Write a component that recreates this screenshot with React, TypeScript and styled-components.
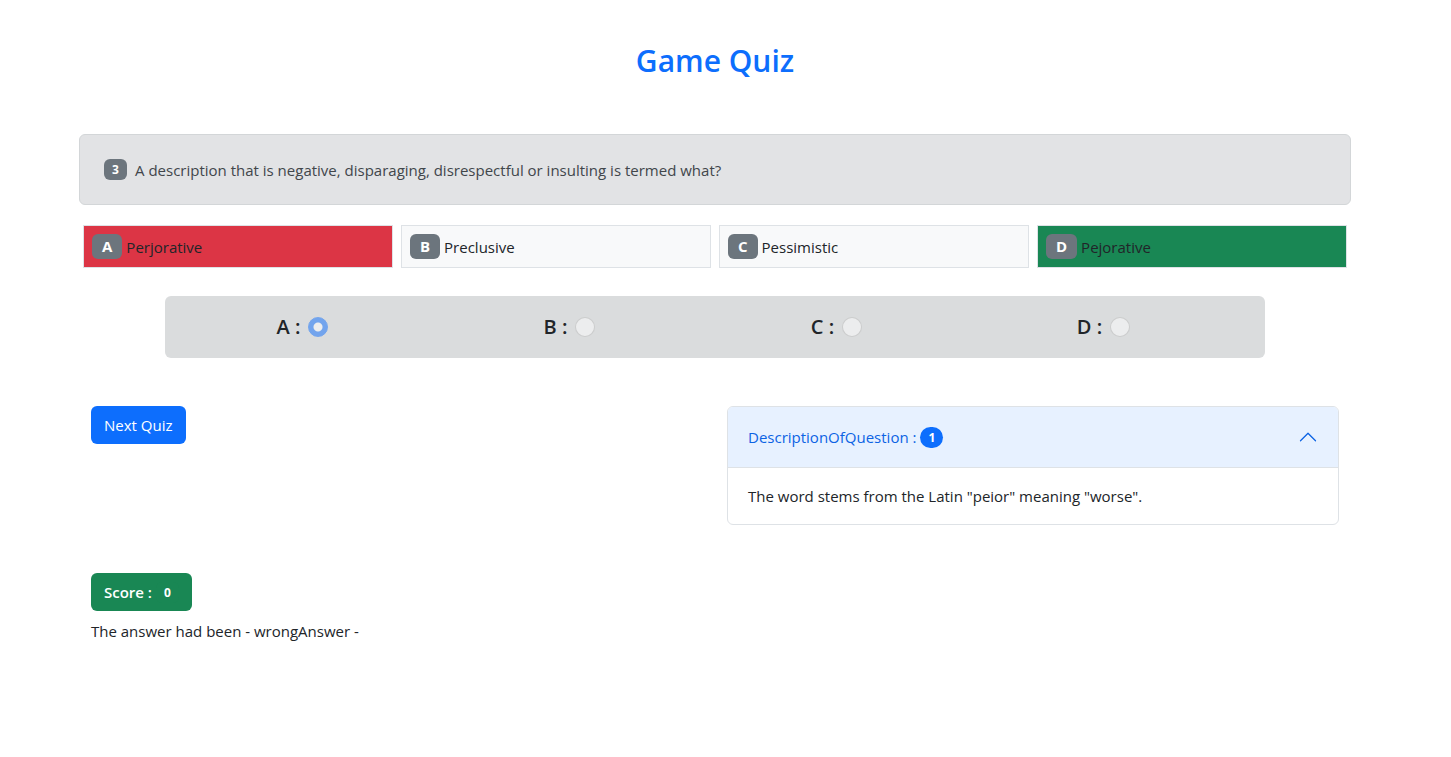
import React, { useState } from "react";
import styled, { createGlobalStyle } from "styled-components";

const GlobalStyle = createGlobalStyle`
  *, *::before, *::after { box-sizing: border-box; }
  body {
    margin: 0;
    background: #fff;
    color: #212529;
    font-family: "Segoe UI", "Open Sans", "Noto Sans", sans-serif;
    font-size: 15px;
    line-height: 24px;
  }
  button, input { font: inherit; }
`;

const Page = styled.div`
  padding: 40px 21px 40px 0;
`;

const Container = styled.main`
  max-width: 1320px;
  margin: 0 auto;
  padding: 0 24px;
`;

const Title = styled.h1`
  margin: 0 0 52px;
  color: #0d6efd;
  font-size: 30px;
  font-weight: 600;
  line-height: 42px;
  text-align: center;
`;

const Question = styled.div`
  display: flex;
  align-items: center;
  gap: 8px;
  min-height: 71px;
  padding: 16px 24px;
  color: #41464b;
  background: #e2e3e5;
  border: 1px solid #d3d6d8;
  border-radius: 6px;
`;

const Badge = styled.span<{ $color?: string; $pill?: boolean }>`
  display: inline-block;
  min-width: 23px;
  padding: 0 8px;
  color: #fff;
  background: ${(p) => p.$color ?? "#6c757d"};
  border-radius: ${(p) => (p.$pill ? "11px" : "6px")};
  font-size: 12px;
  font-weight: 700;
  line-height: 21px;
  text-align: center;
`;

const Answers = styled.ul`
  display: grid;
  grid-template-columns: repeat(4, 1fr);
  gap: 8px;
  margin: 20px 0 28px;
  padding: 0 4px;
  list-style: none;
`;

const fills = { plain: "#f8f9fa", wrong: "#dc3545", correct: "#198754" };

const Answer = styled.li<{ $state: keyof typeof fills }>`
  display: flex;
  align-items: center;
  gap: 4px;
  padding: 8px;
  background: ${(p) => fills[p.$state]};
  border: 1px solid #dee2e6;
`;

const Letter = styled(Badge)`
  min-width: 29px;
  padding: 0 10px;
  font-size: 15px;
  line-height: 25px;
`;

const Choices = styled.fieldset`
  display: grid;
  grid-template-columns: repeat(4, 1fr);
  max-width: 1100px;
  margin: 0 auto 48px;
  padding: 19px 16px;
  background: #dadcdd;
  border: 0;
  border-radius: 6px;
`;

const Choice = styled.label`
  display: flex;
  align-items: center;
  justify-content: center;
  gap: 8px;
  padding-right: 24px;
  font-size: 20px;
  font-weight: 600;
`;

const Radio = styled.input`
  appearance: none;
  width: 20px;
  height: 20px;
  margin: 0;
  background: #fff;
  border: 1px solid rgba(0, 0, 0, 0.25);
  border-radius: 50%;
  opacity: 0.5;

  &:checked {
    background: radial-gradient(circle, #fff 4px, #0d6efd 5px);
    border-color: #0d6efd;
  }
`;

const Columns = styled.div`
  display: grid;
  grid-template-columns: repeat(2, 1fr);
  gap: 24px;
  align-items: start;
  padding: 0 12px;
`;

const Button = styled.button<{ $color: string; $bold?: boolean }>`
  display: inline-flex;
  align-items: center;
  justify-self: start;
  gap: 4px;
  height: 38px;
  padding: 0 13px;
  color: #fff;
  background: ${(p) => p.$color};
  border: 0;
  border-radius: 6px;
  font-weight: ${(p) => (p.$bold ? 600 : 400)};
`;

const Accordion = styled.section`
  overflow: hidden;
  border: 1px solid #dee2e6;
  border-radius: 6px;
`;

const AccordionHeader = styled.button`
  display: flex;
  align-items: center;
  gap: 4px;
  width: 100%;
  height: 61px;
  padding: 0 20px;
  color: #0c63e4;
  background: #e7f1ff;
  border: 0;
  border-bottom: 1px solid #dee2e6;
  text-align: left;

  svg { margin-left: auto; }
`;

const AccordionBody = styled.div`
  padding: 16px 20px;
`;

const Footer = styled.footer`
  margin-top: 48px;
  padding: 0 12px;
`;

const Result = styled.p`
  margin: 8px 0 0;
`;

const answers: { letter: string; text: string; state: keyof typeof fills }[] = [
  { letter: "A", text: "Perjorative", state: "wrong" },
  { letter: "B", text: "Preclusive", state: "plain" },
  { letter: "C", text: "Pessimistic", state: "plain" },
  { letter: "D", text: "Pejorative", state: "correct" },
];

export default function App() {
  const [open, setOpen] = useState(true);

  return (
    <Page>
      <GlobalStyle />
      <Container>
        <Title>Game Quiz</Title>
        <Question>
          <Badge>3</Badge>
          <span>A description that is negative, disparaging, disrespectful or insulting is termed what?</span>
        </Question>
        <Answers>
          {answers.map((a) => (
            <Answer key={a.letter} $state={a.state}>
              <Letter>{a.letter}</Letter>
              <span>{a.text}</span>
            </Answer>
          ))}
        </Answers>
        <Choices>
          {answers.map((a) => (
            <Choice key={a.letter}>
              {a.letter} :
              <Radio type="radio" name="answer" value={a.letter} defaultChecked={a.letter === "A"} disabled />
            </Choice>
          ))}
        </Choices>
        <Columns>
          <Button type="button" $color="#0d6efd">Next Quiz</Button>
          <Accordion>
            <AccordionHeader type="button" aria-expanded={open} onClick={() => setOpen(!open)}>
              <span>DescriptionOfQuestion :</span>
              <Badge $color="#0d6efd" $pill>1</Badge>
              <svg width="20" height="20" viewBox="0 0 16 16" fill="#0c63e4" aria-hidden="true">
                <path
                  transform={open ? "rotate(180 8 8)" : undefined}
                  fillRule="evenodd"
                  d="M1.646 4.646a.5.5 0 0 1 .708 0L8 10.293l5.646-5.647a.5.5 0 0 1 .708.708l-6 6a.5.5 0 0 1-.708 0l-6-6a.5.5 0 0 1 0-.708z"
                />
              </svg>
            </AccordionHeader>
            {open && <AccordionBody>The word stems from the Latin "peior" meaning "worse".</AccordionBody>}
          </Accordion>
        </Columns>
        <Footer>
          <Button type="button" $color="#198754" $bold>
            Score :
            <Badge $color="#198754">0</Badge>
          </Button>
          <Result>The answer had been - wrongAnswer -</Result>
        </Footer>
      </Container>
    </Page>
  );
}
